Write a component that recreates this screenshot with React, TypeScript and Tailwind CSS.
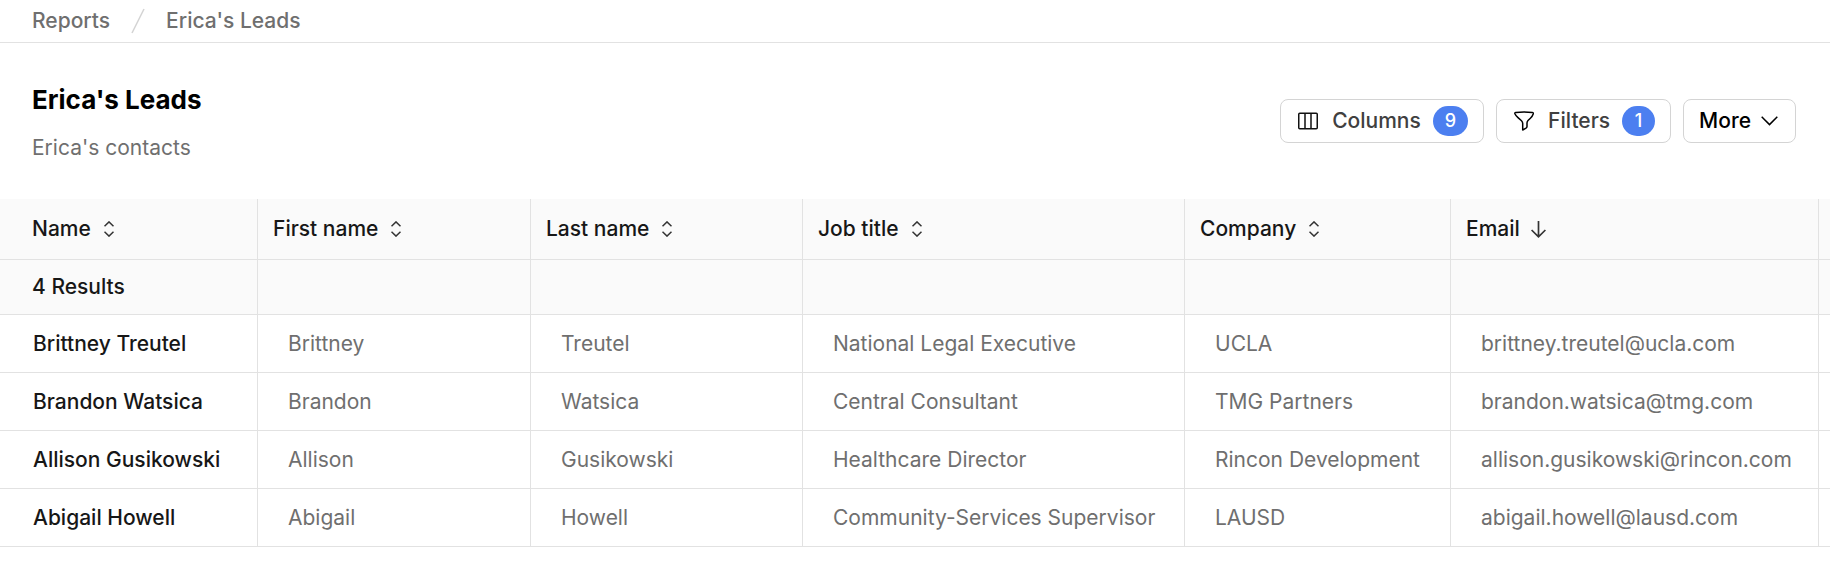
import { useState } from 'react'

type Column = { label: string; width: string }

const columns: Column[] = [
    { label: 'Name', width: 'w-[258px]' },
    { label: 'First name', width: 'w-[273px]' },
    { label: 'Last name', width: 'w-[272px]' },
    { label: 'Job title', width: 'w-[382px]' },
    { label: 'Company', width: 'w-[266px]' },
    { label: 'Email', width: 'w-[368px]' },
]

const contacts = [
    ['Brittney Treutel', 'Brittney', 'Treutel', 'National Legal Executive', 'UCLA', 'brittney.treutel@ucla.com'],
    ['Brandon Watsica', 'Brandon', 'Watsica', 'Central Consultant', 'TMG Partners', 'brandon.watsica@tmg.com'],
    ['Allison Gusikowski', 'Allison', 'Gusikowski', 'Healthcare Director', 'Rincon Development', 'allison.gusikowski@rincon.com'],
    ['Abigail Howell', 'Abigail', 'Howell', 'Community-Services Supervisor', 'LAUSD', 'abigail.howell@lausd.com'],
]

function ColumnsIcon() {
    return (
        <svg width="20" height="18" viewBox="0 0 20 18" fill="none" stroke="#111" strokeWidth="1.5" aria-hidden="true">
            <rect x="0.75" y="1.25" width="18.5" height="15.5" rx="1" />
            <path d="M7 1.25v15.5M13 1.25v15.5" />
        </svg>
    )
}

function FilterIcon() {
    return (
        <svg width="20" height="20" viewBox="1 0 20 20" fill="none" stroke="#000" strokeWidth="1.5" strokeLinejoin="round" aria-hidden="true">
            <path d="M2.8 1.4Q11 0.6 19.2 1.4Q20.6 1.6 20.2 3Q19.5 5.2 17.4 7.2L15 9.5Q14 10.5 14 12V15.5Q14 16.6 13 17.2L9.7 19V12.4Q9.6 10.7 8.5 9.7L5 6.6Q2.7 4.6 1.9 2.8Q1.5 1.6 2.8 1.4Z" />
        </svg>
    )
}

function ChevronIcon() {
    return (
        <svg width="17" height="10" viewBox="0 0 17 10" fill="none" stroke="#000" strokeWidth="1.5" aria-hidden="true">
            <path d="M0.7 0.8L8.5 8.6L16.3 0.8" />
        </svg>
    )
}

function SortIcon() {
    return (
        <svg width="10" height="16" viewBox="0 0 10 16" fill="none" stroke="#333" strokeWidth="1.5" aria-hidden="true">
            <path d="M0.5 5.2L5 0.9L9.5 5.2M0.5 10.8L5 15.1L9.5 10.8" />
        </svg>
    )
}

function SortDownIcon() {
    return (
        <svg width="15" height="17" viewBox="0 0 15 17" fill="none" stroke="#333" strokeWidth="1.7" aria-hidden="true">
            <path d="M7.5 0V16M0.6 9L7.5 15.8L14.4 9" />
        </svg>
    )
}

function Badge({ count }: { count: number }) {
    return (
        <span className="min-w-[33px] rounded-full bg-[#4c7ff0] px-3 py-px text-center text-lg leading-7 text-white">{count}</span>
    )
}

export default function App() {
    const [sorted, setSorted] = useState('Email')

    return (
        <div className="bg-white font-['Inter',sans-serif] text-[21px] leading-7 text-[#171717]">
            <nav aria-label="Breadcrumb" className="flex h-[43px] items-center gap-[21px] border-b border-[#e2e2e2] px-8 pb-px font-medium text-[#6f6f6f]">
                <a href="#reports">Reports</a>
                <svg width="14" height="26" viewBox="0 0 14 26" fill="none" stroke="#d4d4d4" strokeWidth="1.5" aria-hidden="true">
                    <path d="M13 1L1 25" />
                </svg>
                <a href="#ericas-leads">Erica's Leads</a>
            </nav>

            <header className="flex items-center justify-between py-[37px] pr-[34px] pl-8">
                <div>
                    <h1 className="text-[26px] leading-10 font-bold text-black">Erica's Leads</h1>
                    <p className="pt-[14px] text-[#6f6f6f]">Erica's contacts</p>
                </div>
                <div className="flex gap-3">
                    <button className="flex h-11 items-center rounded-lg border border-[#d4d4d4] pr-[15px] pl-[17px] font-medium text-[#404040]">
                        <ColumnsIcon />
                        <span className="pr-3 pl-[14px]">Columns</span>
                        <Badge count={9} />
                    </button>
                    <button className="flex h-11 items-center rounded-lg border border-[#d4d4d4] pr-[15px] pl-[17px] font-medium text-[#404040]">
                        <FilterIcon />
                        <span className="pr-3 pl-[14px]">Filters</span>
                        <Badge count={1} />
                    </button>
                    <button className="flex h-11 items-center gap-[10px] rounded-lg border border-[#d4d4d4] pr-[17px] pl-[15px] font-medium text-black">
                        More
                        <ChevronIcon />
                    </button>
                </div>
            </header>

            <table className="w-full table-fixed border-separate border-spacing-0 text-left whitespace-nowrap">
                <thead className="bg-[#fafafa]">
                    <tr className="h-[61px]">
                        {columns.map(({ label, width }) => (
                            <th key={label} scope="col" className={`${width} border-r border-b border-[#e2e2e2] px-[15px] font-medium first:pl-8`}>
                                <button onClick={() => setSorted(label)} className="flex items-center">
                                    {label}
                                    <span className={sorted === label ? 'pl-[11px]' : 'pl-[13px]'}>
                                        {sorted === label ? <SortDownIcon /> : <SortIcon />}
                                    </span>
                                </button>
                            </th>
                        ))}
                        <td className="border-b border-[#e2e2e2]" />
                    </tr>
                    <tr className="h-[55px]">
                        <th scope="row" className="border-r border-b border-[#e2e2e2] pl-8 font-medium">{contacts.length} Results</th>
                        {columns.slice(1).map(({ label }) => (
                            <td key={label} className="border-r border-b border-[#e2e2e2]" />
                        ))}
                        <td className="border-b border-[#e2e2e2]" />
                    </tr>
                </thead>
                <tbody>
                    {contacts.map(([name, ...details]) => (
                        <tr key={name} className="h-[58px]">
                            <th scope="row" className="border-r border-b border-[#e2e2e2] pl-[33px] font-medium">{name}</th>
                            {details.map((value, i) => (
                                <td key={i} className="border-r border-b border-[#e2e2e2] pl-[30px] text-[#6f6f6f]">{value}</td>
                            ))}
                            <td className="border-b border-[#e2e2e2]" />
                        </tr>
                    ))}
                </tbody>
            </table>
        </div>
    )
}
